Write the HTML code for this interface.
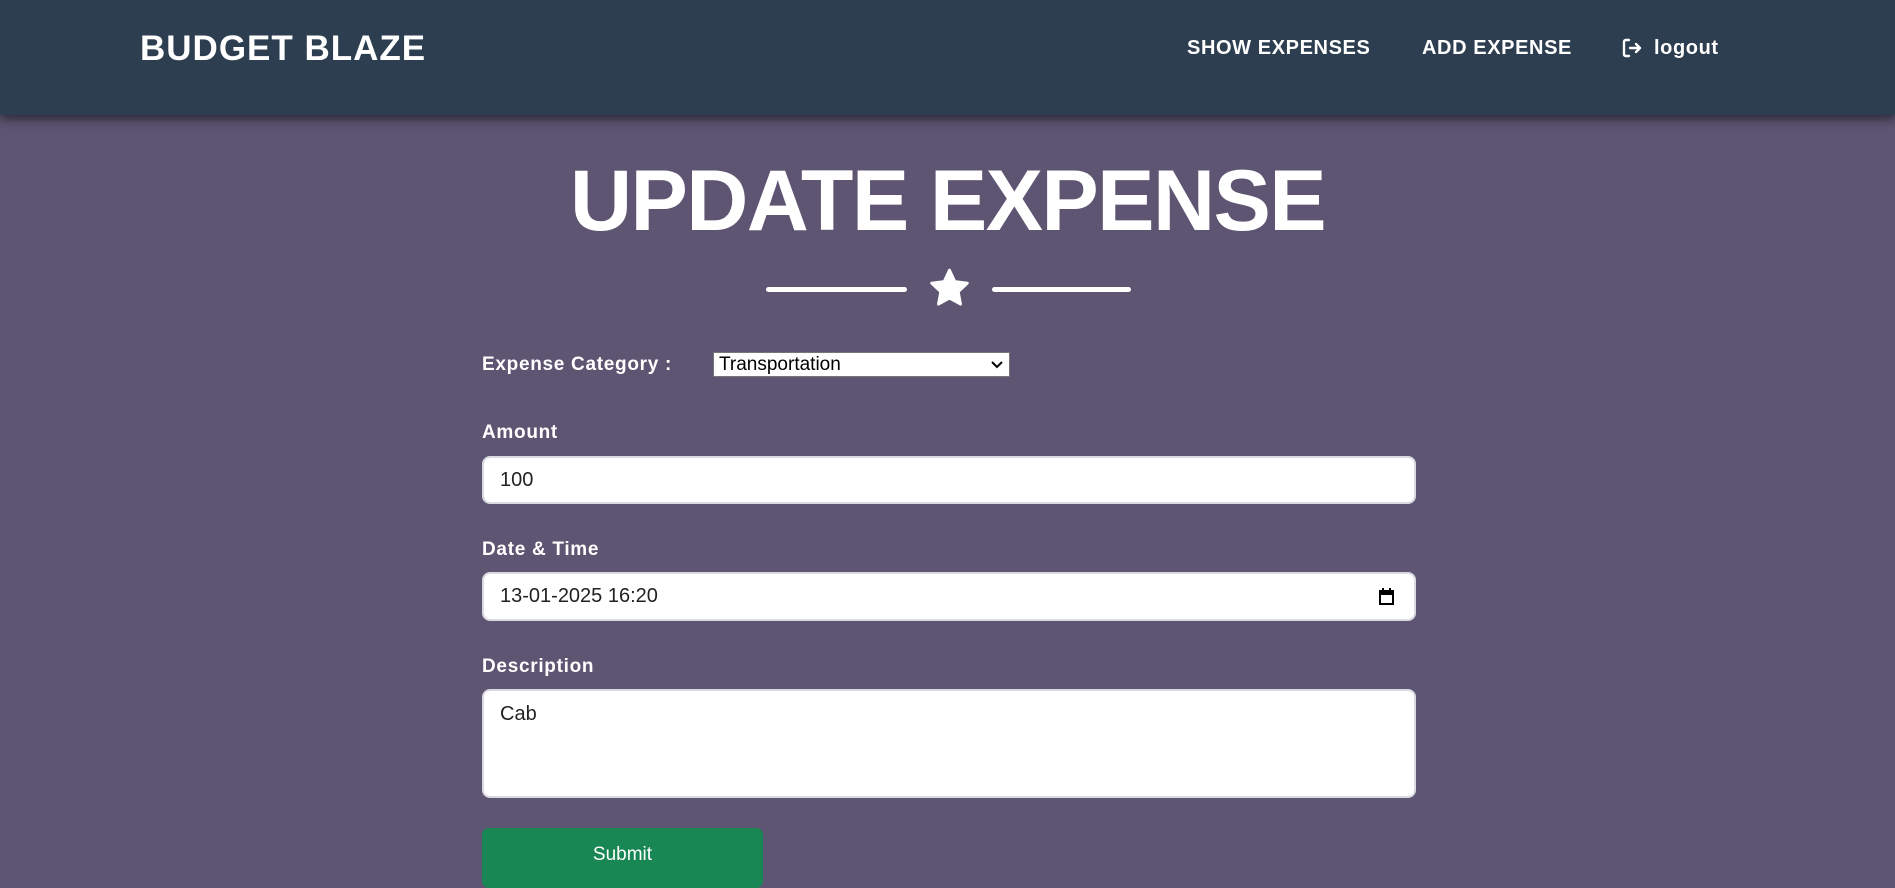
<!DOCTYPE html>
<html><head><meta charset="utf-8"><style>
*{box-sizing:border-box;margin:0;padding:0}
html,body{width:1895px;height:876px;overflow:hidden;background:#5d5572;font-family:"Liberation Sans",sans-serif;color:#fff}
.hdr{position:absolute;left:0;top:0;width:1895px;height:115px;background:#2c3e50;box-shadow:0 4px 10px rgba(0,0,0,.55);z-index:2}
.abs{position:absolute;white-space:nowrap;font-weight:bold;line-height:1}
.brand{left:140px;top:31px;font-size:35px;letter-spacing:1px}
.nav{font-size:20px;top:38px;letter-spacing:.6px}
.title{left:0;width:1895px;text-align:center;top:158px;font-size:86px;letter-spacing:-1.6px}
.line{position:absolute;top:287px;height:5px;background:#fff;border-radius:3px}
.lbl{font-size:19px;left:482px;letter-spacing:.7px}
.sel{position:absolute;left:713px;top:352px;width:297px;height:25px;background:#fff;border:1px solid #767676;color:#000;font-size:19px;padding:2px 5px;line-height:20px}
.inp{position:absolute;left:482px;width:934px;background:#fff;border:2px solid #d9d9e0;border-radius:8px;color:#222;font-size:20px;padding-left:16px}
.btn{position:absolute;left:482px;top:828px;width:281px;height:60px;background:#198754;border-radius:7px;text-align:center;font-size:19px;padding-top:16px}
</style></head><body>
<div class="hdr">
<div class="abs brand">BUDGET BLAZE</div>
<div class="abs nav" style="left:1187px">SHOW EXPENSES</div>
<div class="abs nav" style="left:1422px">ADD EXPENSE</div>
<svg style="position:absolute;left:1622px;top:38px" width="20" height="20" viewBox="0 0 20 20" fill="none" stroke="#fff" stroke-width="2.4" stroke-linecap="round" stroke-linejoin="round"><path d="M7 2H4Q2 2 2 4V16Q2 18 4 18H7"/><path d="M8 10H18M14 6L18 10L14 14"/></svg>
<div class="abs nav" style="left:1654px">logout</div>
</div>
<div class="abs title">UPDATE EXPENSE</div>
<div class="line" style="left:766px;width:141px"></div>
<div class="line" style="left:992px;width:139px"></div>
<svg style="position:absolute;left:928px;top:268px" width="43" height="41" viewBox="0 0 24 23"><path d="M12 1.2L15 7.6L22 8.5L16.9 13.3L18.2 20.3L12 16.9L5.8 20.3L7.1 13.3L2 8.5L9 7.6Z" fill="#fff" stroke="#fff" stroke-width="1.6" stroke-linejoin="round"/></svg>
<div class="abs lbl" style="top:355px">Expense Category :</div>
<div class="sel">Transportation<svg style="position:absolute;right:6px;top:8px" width="12" height="8" viewBox="0 0 12 8"><path d="M1 1L6 6L11 1" stroke="#000" stroke-width="2" fill="none"/></svg></div>
<div class="abs lbl" style="top:423px">Amount</div>
<div class="inp" style="top:456px;height:48px;line-height:44px">100</div>
<div class="abs lbl" style="top:540px">Date &amp; Time</div>
<div class="inp" style="top:572px;height:49px;line-height:45px">13-01-2025 16:20<svg style="position:absolute;right:20px;top:14px" width="15" height="17" viewBox="0 0 15 17"><rect x="1" y="3" width="13" height="13" fill="none" stroke="#000" stroke-width="2"/><rect x="1" y="3" width="13" height="4" fill="#000"/><rect x="3" y="0" width="2" height="4" fill="#000"/><rect x="10" y="0" width="2" height="4" fill="#000"/></svg></div>
<div class="abs lbl" style="top:657px">Description</div>
<div class="inp" style="top:689px;height:109px;padding-top:12px;line-height:22px">Cab</div>
<div class="btn">Submit</div>
</body></html>
